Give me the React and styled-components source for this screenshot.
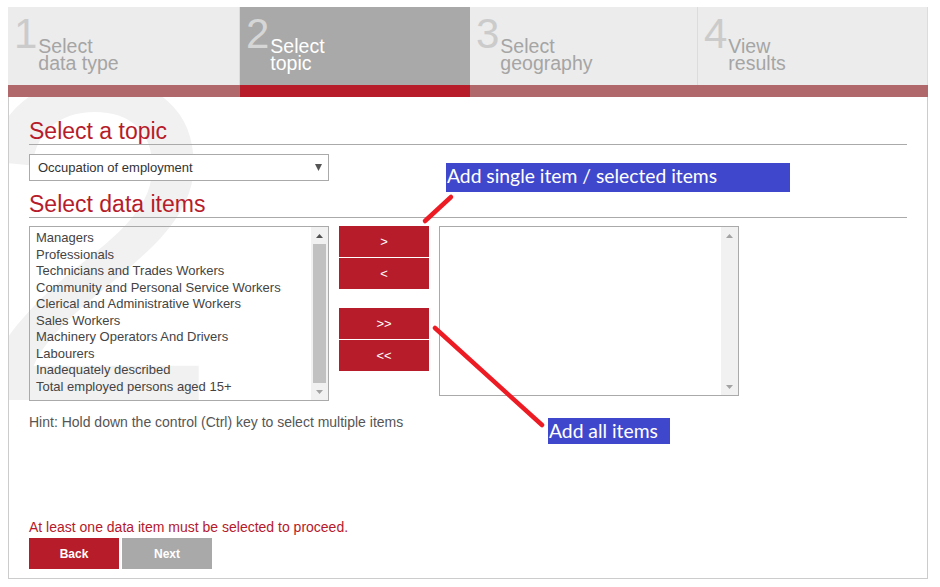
import React from 'react'
import styled, { createGlobalStyle } from 'styled-components'

const GlobalStyle = createGlobalStyle`
  body {
    margin: 0;
    background: #fff;
    font-family: "Liberation Sans", Arial, sans-serif;
  }
`

const Page = styled.div`
  position: relative;
  width: 920px;
  padding: 7px 8px;
`

const Steps = styled.div`
  display: flex;
  height: 78px;
`

const Step = styled.div`
  box-sizing: border-box;
  width: ${p => p.$w}px;
  display: flex;
  align-items: flex-start;
  padding: 6px 0 0 6px;
  background: ${p => (p.$active ? '#a9a9a9' : '#ececec')};
  border-right: 1px solid ${p => (p.$active ? '#a9a9a9' : '#dcdcdc')};
`

const StepNum = styled.span`
  font-size: 42px;
  line-height: 42px;
  color: ${p => (p.$active ? '#d6d6d6' : '#cbcbcb')};
`

const StepLabel = styled.span`
  margin: 25px 0 0 1px;
  font-size: 19.5px;
  line-height: 17px;
  color: ${p => (p.$active ? '#fff' : '#a5a5a5')};
`

const Progress = styled.div`
  display: flex;
  height: 12px;
`

const ProgressPart = styled.div`
  width: ${p => p.$w}px;
  background: ${p => (p.$active ? '#b71c2b' : '#b0686b')};
`

const Content = styled.div`
  position: relative;
  z-index: 0;
  overflow: hidden;
  box-sizing: border-box;
  height: 482px;
  display: flex;
  flex-direction: column;
  padding: 0 20px 9px;
  border: 1px solid #ccc;
  border-top: none;
  background: #fff;
`

const Watermark = styled.span`
  position: absolute;
  left: -43px;
  top: -86px;
  z-index: -1;
  font-size: 460px;
  line-height: 1;
  color: #f1f1f1;
  pointer-events: none;
  user-select: none;
`

const SectionTitle = styled.h2`
  margin: ${p => p.$gap}px 0 0;
  font-size: 23px;
  line-height: 26px;
  font-weight: normal;
  color: #b71c2b;
  border-bottom: 1px solid #aaa;
`

const Dropdown = styled.div`
  box-sizing: border-box;
  width: 300px;
  height: 27px;
  margin-top: 9px;
  display: flex;
  align-items: center;
  justify-content: space-between;
  padding: 0 6px 0 8px;
  border: 1px solid #aaa;
  background: #fff;
  font-size: 13px;
  color: #333;
`

const Transfer = styled.div`
  display: flex;
  align-items: flex-start;
  gap: 10px;
  margin-top: 8px;
`

const ListBox = styled.div`
  box-sizing: border-box;
  width: 300px;
  height: ${p => p.$height}px;
  display: flex;
  border: 1px solid #aaa;
`

const Options = styled.ul`
  flex: 1;
  margin: 0;
  padding: 3px 0 0 6px;
  list-style: none;
  font-size: 13px;
  line-height: 16.5px;
  color: #444;
`

const Scrollbar = styled.div`
  width: 17px;
  display: flex;
  flex-direction: column;
  align-items: center;
  background: #f1f1f1;
`

const ScrollArrow = styled.div`
  height: 17px;
  display: flex;
  align-items: center;
  justify-content: center;
`

const Thumb = styled.div`
  width: 13px;
  flex: 1;
  background: #c1c1c1;
`

const Track = styled.div`
  flex: 1;
`

const ButtonColumn = styled.div`
  display: flex;
  flex-direction: column;
  gap: 19px;
`

const ButtonGroup = styled.div`
  display: flex;
  flex-direction: column;
  gap: 1px;
`

const MoveButton = styled.button`
  width: 90px;
  height: 31px;
  padding: 0;
  border: none;
  background: #b71c2b;
  color: #fff;
  font-family: inherit;
  font-size: 13px;
`

const Hint = styled.p`
  margin: 13px 0 0;
  font-size: 14px;
  line-height: 16px;
  color: #555;
`

const Footer = styled.div`
  margin-top: auto;
`

const Error = styled.p`
  margin: 0 0 3px;
  font-size: 14px;
  line-height: 16px;
  color: #b5192b;
`

const NavRow = styled.div`
  display: flex;
  gap: 3px;
`

const NavButton = styled.button`
  width: 90px;
  height: 31px;
  padding: 0;
  border: none;
  background: ${p => (p.$primary ? '#b71c2b' : '#a9a9a9')};
  color: #fff;
  font-family: inherit;
  font-size: 12px;
  font-weight: bold;
`

const Callout = styled.div`
  position: absolute;
  left: ${p => p.$x}px;
  top: ${p => p.$y}px;
  width: ${p => p.$w}px;
  height: ${p => p.$h}px;
  box-sizing: border-box;
  padding-left: 1px;
  background: #3f48cc;
  color: #fff;
  font-family: Lato, "Open Sans", sans-serif;
  font-size: 19.3px;
  line-height: 26px;
  white-space: nowrap;
`

const Marks = styled.svg`
  position: absolute;
  left: 0;
  top: 0;
  pointer-events: none;
`

const Triangle = ({ up, color }) => (
  <svg width="7" height="4" viewBox="0 0 7 4">
    <path d={up ? 'M0 4 L3.5 0 L7 4 Z' : 'M0 0 L7 0 L3.5 4 Z'} fill={color} />
  </svg>
)

const steps = [
  { n: 1, top: 'Select', bottom: 'data type', w: 232 },
  { n: 2, top: 'Select', bottom: 'topic', w: 230, active: true },
  { n: 3, top: 'Select', bottom: 'geography', w: 228 },
  { n: 4, top: 'View', bottom: 'results', w: 230 },
]

const items = [
  'Managers',
  'Professionals',
  'Technicians and Trades Workers',
  'Community and Personal Service Workers',
  'Clerical and Administrative Workers',
  'Sales Workers',
  'Machinery Operators And Drivers',
  'Labourers',
  'Inadequately described',
  'Total employed persons aged 15+',
]

const App = () => {
  return (
    <Page>
      <GlobalStyle />

      <Steps>
        {steps.map(s => (
          <Step key={s.n} $active={s.active} $w={s.w}>
            <StepNum $active={s.active}>{s.n}</StepNum>
            <StepLabel $active={s.active}>
              {s.top}
              <br />
              {s.bottom}
            </StepLabel>
          </Step>
        ))}
      </Steps>

      <Progress>
        {steps.map(s => (
          <ProgressPart key={s.n} $active={s.active} $w={s.w} />
        ))}
      </Progress>

      <Content>
        <Watermark>2</Watermark>

        <SectionTitle $gap={21}>Select a topic</SectionTitle>
        <Dropdown>
          <span>Occupation of employment</span>
          <svg width="7" height="7" viewBox="0 0 7 7">
            <path d="M0 0 L7 0 L3.5 7 Z" fill="#555" />
          </svg>
        </Dropdown>

        <SectionTitle $gap={10}>Select data items</SectionTitle>
        <Transfer>
          <ListBox $height={175}>
            <Options>
              {items.map(i => (
                <li key={i}>{i}</li>
              ))}
            </Options>
            <Scrollbar>
              <ScrollArrow><Triangle up color="#505050" /></ScrollArrow>
              <Thumb />
              <ScrollArrow><Triangle color="#a3a3a3" /></ScrollArrow>
            </Scrollbar>
          </ListBox>

          <ButtonColumn>
            <ButtonGroup>
              <MoveButton>&gt;</MoveButton>
              <MoveButton>&lt;</MoveButton>
            </ButtonGroup>
            <ButtonGroup>
              <MoveButton>&gt;&gt;</MoveButton>
              <MoveButton>&lt;&lt;</MoveButton>
            </ButtonGroup>
          </ButtonColumn>

          <ListBox $height={170}>
            <Options />
            <Scrollbar>
              <ScrollArrow><Triangle up color="#a3a3a3" /></ScrollArrow>
              <Track />
              <ScrollArrow><Triangle color="#a3a3a3" /></ScrollArrow>
            </Scrollbar>
          </ListBox>
        </Transfer>

        <Hint>Hint: Hold down the control (Ctrl) key to select multiple items</Hint>

        <Footer>
          <Error>At least one data item must be selected to proceed.</Error>
          <NavRow>
            <NavButton $primary>Back</NavButton>
            <NavButton>Next</NavButton>
          </NavRow>
        </Footer>
      </Content>

      {/* annotations drawn over the screen */}
      <Marks width="940" height="587">
        <line x1="425" y1="221" x2="451" y2="197" stroke="#ed1c24" strokeWidth="4.5" strokeLinecap="round" />
        <line x1="435" y1="328" x2="542" y2="425" stroke="#ed1c24" strokeWidth="4.5" strokeLinecap="round" />
      </Marks>
      <Callout $x={446} $y={163} $w={344} $h={29}>Add single item / selected items</Callout>
      <Callout $x={548} $y={418} $w={122} $h={26}>Add all items</Callout>
    </Page>
  )
}

export default App
